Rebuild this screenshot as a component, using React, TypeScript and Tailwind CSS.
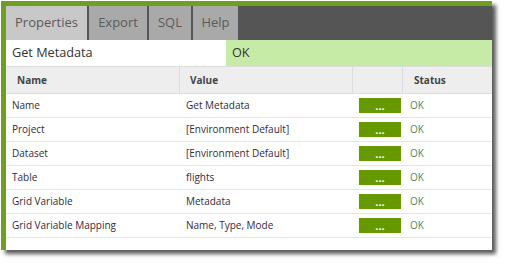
const rows = [
  { name: "Name", value: "Get Metadata" },
  { name: "Project", value: "[Environment Default]" },
  { name: "Dataset", value: "[Environment Default]" },
  { name: "Table", value: "flights" },
  { name: "Grid Variable", value: "Metadata" },
  { name: "Grid Variable Mapping", value: "Name, Type, Mode" },
];

const tabs = [
  { label: "Properties", w: "w-[81px]", active: true },
  { label: "Export", w: "w-[58px]", active: false },
  { label: "SQL", w: "w-[42px]", active: false },
  { label: "Help", w: "w-[45px]", active: false },
];

export default function App() {
  return (
    <div className="w-[507px] h-[267px] bg-white pt-[1px] pl-[1px] font-['Open_Sans',sans-serif]">
      <div className="w-[491px] h-[249px] border-t-[5px] border-l-[5px] border-[#6f9f22] bg-white shadow-[4px_4px_4px_rgba(0,0,0,0.65)] flex flex-col">
        {/* tab strip */}
        <div className="flex h-[34px] bg-[#555555] gap-[2px]">
          {tabs.map((t) => (
            <div
              key={t.label}
              className={`${t.w} flex items-center justify-center text-[13px] text-[#5a5a5a] ${
                t.active ? "bg-[#c8c8c8]" : "bg-[#a9a9a9]"
              }`}
            >
              {t.label}
            </div>
          ))}
        </div>

        {/* title */}
        <div className="flex h-[26px] text-[12.7px] text-[#333]">
          <div className="w-[220px] flex items-center pl-[6px]">Get Metadata</div>
          <div className="flex-1 flex items-center pl-[6px] bg-[#c6eba6]">OK</div>
        </div>

        {/* header */}
        <div className="flex h-[28px] bg-[#eeeeee] border-t border-b border-[#dddddd] text-[10px] font-bold text-[#444]">
          <div className="w-[174px] flex items-center pl-[11px] border-r border-[#dddddd]">Name</div>
          <div className="w-[173px] flex items-center pl-[10px] border-r border-[#dddddd]">Value</div>
          <div className="w-[50px] border-r border-[#dddddd]" />
          <div className="flex-1 flex items-center pl-[11px]">Status</div>
        </div>

        {rows.map((r) => (
          <div key={r.name} className="flex h-[24px] border-b border-[#e6e6e6] text-[10px] text-[#332b3d]">
            <div className="w-[174px] flex items-center pl-[6px]">{r.name}</div>
            <div className="w-[173px] flex items-center pl-[6px]">{r.value}</div>
            <div className="w-[50px] flex items-center pl-[6px]">
              <div className="w-[42px] h-[15px] bg-[#669900] text-white text-[11px] font-bold leading-none flex items-end justify-center pb-[2px]">
                ...
              </div>
            </div>
            <div className="flex-1 flex items-center pl-[7px] text-[#4a8a6a]">OK</div>
          </div>
        ))}
      </div>
    </div>
  );
}
